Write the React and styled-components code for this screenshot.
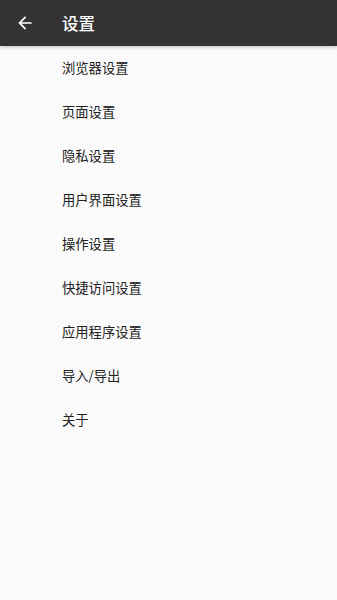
import React from "react";
import styled, { createGlobalStyle } from "styled-components";

const Global = createGlobalStyle`
  html, body { margin: 0; padding: 0; background: #fafafa; }
  body { font-family: "Noto Sans CJK SC", "Noto Sans", Roboto, sans-serif; }
`;

const Page = styled.div`
  width: 337px;
  min-height: 600px;
  background: #fafafa;
  display: flex;
  flex-direction: column;
`;

const Toolbar = styled.header`
  height: 46px;
  background: #333333;
  display: flex;
  align-items: center;
  box-shadow: 0 1px 4px rgba(0, 0, 0, 0.25);
  position: relative;
  z-index: 1;
`;

const BackButton = styled.button`
  width: 62px;
  height: 46px;
  border: 0;
  background: transparent;
  padding: 0 0 0 15px;
  display: flex;
  align-items: center;
  color: #ffffff;
`;

const Title = styled.h1`
  margin: 0;
  font-size: 16.5px;
  font-weight: 500;
  color: #ffffff;
  padding-bottom: 1px;
`;

const List = styled.ul`
  list-style: none;
  margin: 0;
  padding: 0;
`;

const Item = styled.li`
  height: 44px;
  box-sizing: border-box;
  padding: 0 0 2px 62px;
  display: flex;
  align-items: center;
  font-size: 13.3px;
  color: #212121;
`;

const items = [
  "浏览器设置",
  "页面设置",
  "隐私设置",
  "用户界面设置",
  "操作设置",
  "快捷访问设置",
  "应用程序设置",
  "导入/导出",
  "关于",
];

export default function App() {
  return (
    <Page>
      <Global />
      <Toolbar>
        <BackButton aria-label="back">
          <svg width="20" height="20" viewBox="0 0 24 24" fill="currentColor">
            <path d="M20 11H7.83l5.59-5.59L12 4l-8 8 8 8 1.41-1.41L7.83 13H20v-2z" />
          </svg>
        </BackButton>
        <Title>设置</Title>
      </Toolbar>
      <List>
        {items.map((t) => (
          <Item key={t}>{t}</Item>
        ))}
      </List>
    </Page>
  );
}
